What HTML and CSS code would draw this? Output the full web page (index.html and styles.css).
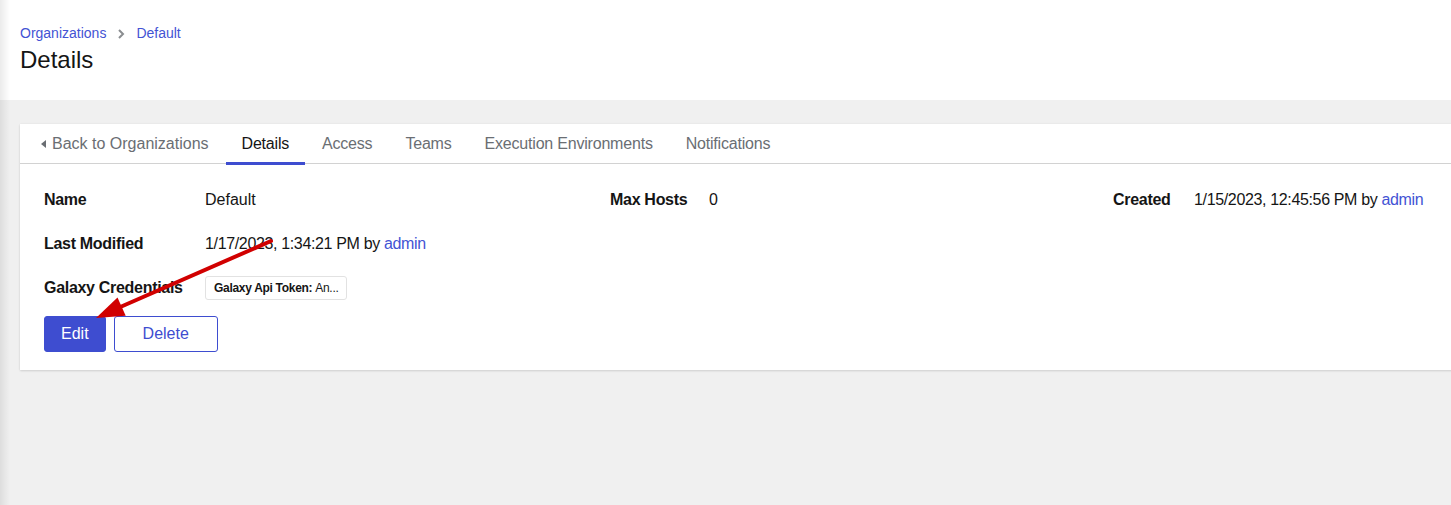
FILE: index.html
```html
<!DOCTYPE html>
<html lang="en">
<head>
<meta charset="utf-8">
<title>Details</title>
<link rel="stylesheet" href="styles.css">
</head>
<body>
<div class="app">
  <header class="page-header">
    <nav class="breadcrumb">
      <a class="crumb" href="#">Organizations</a>
      <span class="crumb-sep">
        <svg width="8" height="10" viewBox="0 0 8 10"><path d="M2 1 L6 5 L2 9" fill="none" stroke="#8a8d90" stroke-width="2"/></svg>
      </span>
      <a class="crumb" href="#">Default</a>
    </nav>
    <h1 class="title">Details</h1>
  </header>
  <main class="main">
    <section class="card">
      <div class="tabs">
        <a class="tab tab-back" href="#"><span class="caret"></span>Back to Organizations</a>
        <a class="tab active" href="#">Details</a>
        <a class="tab" href="#">Access</a>
        <a class="tab" href="#">Teams</a>
        <a class="tab" href="#">Execution Environments</a>
        <a class="tab" href="#">Notifications</a>
      </div>
      <div class="card-body">
        <dl class="details">
          <dt class="label">Name</dt>
          <dd class="value">Default</dd>
          <dt class="label">Max Hosts</dt>
          <dd class="value">0</dd>
          <dt class="label">Created</dt>
          <dd class="value tight">1/15/2023, 12:45:56 PM by <a class="link" href="#">admin</a></dd>

          <dt class="label">Last Modified</dt>
          <dd class="value tight span5">1/17/2023, 1:34:21 PM by <a class="link" href="#">admin</a></dd>

          <dt class="label">Galaxy Credentials</dt>
          <dd class="value span5"><span class="chip"><b>Galaxy Api Token:</b> An...</span></dd>
        </dl>
        <div class="actions">
          <button class="btn btn-primary">Edit</button>
          <button class="btn btn-secondary">Delete</button>
        </div>
      </div>
    </section>
  </main>
  <div class="edge-shadow"></div>
  <svg class="annotation" width="1451" height="505" viewBox="0 0 1451 505">
    <line x1="271" y1="241" x2="118" y2="308" stroke="#d10000" stroke-width="4" stroke-linecap="round"/>
    <polygon points="96,318 117.5,297.5 125.7,315.7" fill="#d10000"/>
  </svg>
</div>
</body>
</html>
```
FILE: styles.css
```css
* { box-sizing: border-box; }
html, body { margin: 0; padding: 0; }
body {
  background: #f0f0f0;
  font-family: "Liberation Sans", Arial, sans-serif;
  font-size: 16px;
  color: #151515;
  overflow: hidden;
}
.app {
  position: relative;
  width: 1451px;
  height: 505px;
  overflow: hidden;
}
a { text-decoration: none; }

.page-header {
  background: #fff;
  height: 100px;
  padding: 23px 20px 0 20px;
}
.breadcrumb {
  display: flex;
  align-items: center;
  font-size: 14px;
  line-height: 21px;
}
.crumb { color: #4353d4; }
.crumb-sep {
  display: flex;
  align-items: center;
  margin: 0 11px 0 11px;
  height: 21px;
}
.title {
  margin: 1px 0 0 0;
  font-size: 24px;
  font-weight: 400;
  line-height: 29px;
  color: #151515;
}

.main {
  padding: 24px 0 0 20px;
}
.card {
  background: #fff;
  width: calc(100% + 40px);
  box-shadow: 0 1px 2px rgba(3,3,3,0.12), 0 0 2px rgba(3,3,3,0.06);
}
.tabs {
  display: flex;
  border-bottom: 1px solid #d2d2d2;
  padding-left: 5px;
  height: 40px;
}
.tab {
  position: relative;
  display: flex;
  align-items: center;
  padding: 0 16px;
  height: 40px;
  color: #6a6e73;
  font-size: 16px;
  line-height: 24px;
  letter-spacing: -0.2px;
}
.tab-back { letter-spacing: 0; }
.tab + .tab { margin-left: 1px; }
.tab.active { color: #151515; }
.tab.active::after {
  content: "";
  position: absolute;
  left: 0;
  right: 0;
  bottom: -1px;
  height: 3px;
  background: #3e4dd0;
}
.caret {
  display: inline-block;
  width: 0;
  height: 0;
  border-top: 4px solid transparent;
  border-bottom: 4px solid transparent;
  border-right: 5px solid #6a6e73;
  margin-right: 6px;
}

.card-body {
  padding: 24px 24px 18px 24px;
}
.details {
  display: grid;
  grid-template-columns: 161px 405px 99px 404px 81px 1fr;
  row-gap: 20px;
  margin: 0;
}
.label {
  font-weight: 700;
  line-height: 24px;
  margin: 0;
  letter-spacing: -0.3px;
  white-space: nowrap;
}
.value {
  margin: 0;
  line-height: 24px;
  white-space: nowrap;
}
.value.tight { letter-spacing: -0.35px; }
.span5 { grid-column: span 5; }
.link { color: #4353d4; }
.chip {
  display: inline-flex;
  align-items: center;
  height: 24px;
  padding: 0 8px;
  border: 1px solid #e2e2e2;
  border-radius: 3px;
  font-size: 12px;
  letter-spacing: -0.3px;
  color: #151515;
  vertical-align: top;
}
.chip b { font-weight: 700; margin-right: 3px; }

.actions {
  display: flex;
  gap: 8px;
  margin-top: 16px;
}
.btn {
  font-family: inherit;
  font-size: 16px;
  line-height: 24px;
  height: 36px;
  border-radius: 3px;
  cursor: pointer;
}
.btn-primary {
  background: #3e4dd0;
  color: #fff;
  border: 1px solid #3e4dd0;
  padding: 0 16px;
}
.btn-secondary {
  background: #fff;
  color: #3e4dd0;
  border: 1px solid #3e4dd0;
  padding: 0 28px;
}

.edge-shadow {
  position: absolute;
  left: 0;
  top: 0;
  bottom: 0;
  width: 10px;
  background: linear-gradient(to right, rgba(0,0,0,0.08), rgba(0,0,0,0));
  pointer-events: none;
}
.annotation {
  position: absolute;
  left: 0;
  top: 0;
  pointer-events: none;
}
```
